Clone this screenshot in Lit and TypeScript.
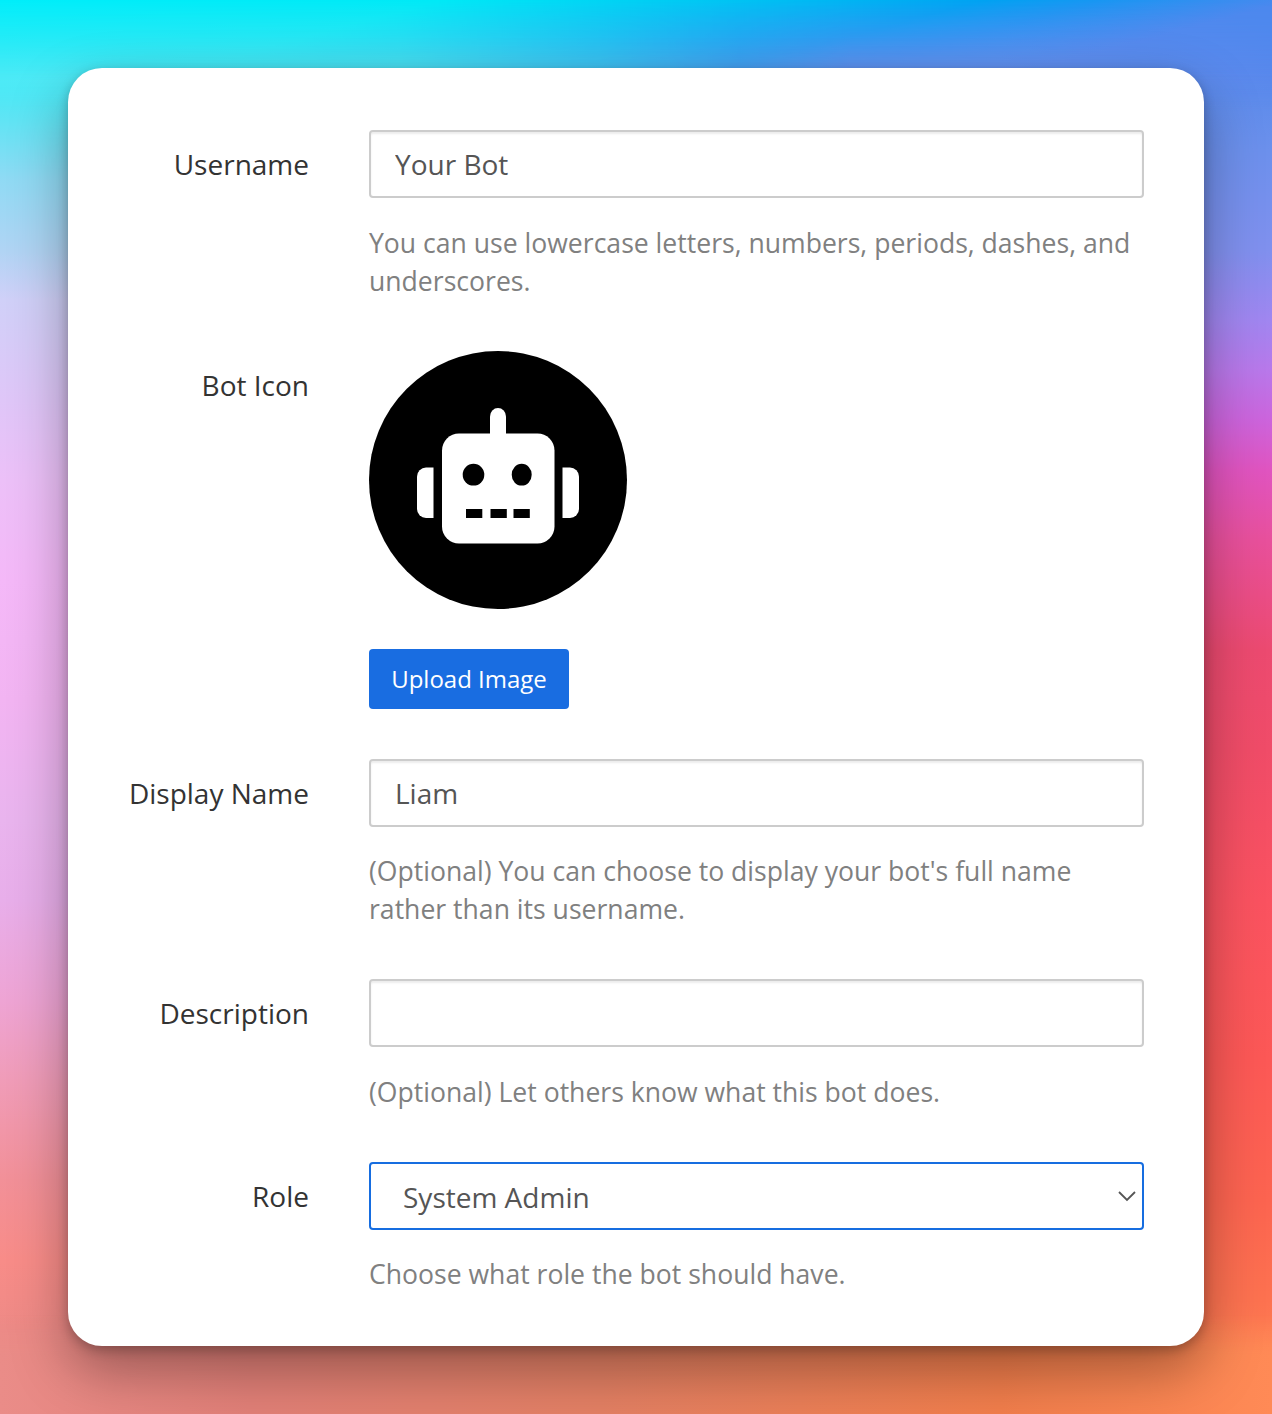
import { LitElement, html, css, svg, nothing } from "lit";
import { customElement, property } from "lit/decorators.js";

const robot = svg`
  <circle cx="129" cy="129" r="129" fill="#000"/>
  <g fill="#fff">
    <path d="M121 84V65.500a8 8.500 0 0 1 16 0V84z"/>
    <rect x="73" y="82.500" width="112.500" height="110" rx="17"/>
    <path d="M64.500 116.500v50.500h-7.500a9 9 0 0 1-9-9v-32.500a9 9 0 0 1 9-9z"/>
    <path d="M193.500 116.500v50.500h7.500a9 9 0 0 0 9-9v-32.500a9 9 0 0 0-9-9z"/>
  </g>
  <g fill="#000">
    <ellipse cx="104.500" cy="123.700" rx="10.800" ry="10.900"/>
    <ellipse cx="152.700" cy="123.700" rx="10" ry="10.900"/>
    <rect x="97" y="158" width="16.300" height="9"/>
    <rect x="121.500" y="158" width="16.300" height="9"/>
    <rect x="144.500" y="158" width="16.300" height="9"/>
  </g>`;

@customElement("form-row")
class FormRow extends LitElement {
  @property() label = "";
  @property() help = "";

  static styles = css`
    :host { display: grid; grid-template-columns: 241px 775px; column-gap: 60px; }
    .label { text-align: right; color: #333; font-size: 28px; line-height: 38px; padding-top: 15px; }
    .help { margin: var(--help-gap, 25px) 0 0; font-size: 26.580px; line-height: 38px; color: #808080; }
  `;

  render() {
    return html`
      <div class="label">${this.label}</div>
      <div class="body">
        <slot></slot>
        ${this.help ? html`<p class="help">${this.help}</p>` : nothing}
      </div>`;
  }
}

@customElement("app-root")
class AppRoot extends LitElement {
  static styles = css`
    :host {
      display: block;
      font-family: "Open Sans", "Noto Sans", sans-serif;
    }
    .page {
      position: relative;
      isolation: isolate;
      box-sizing: border-box;
      height: 1414px;
      padding: 68px;
      overflow: hidden;
      background: linear-gradient(180deg,
        #00f0fc 0, #38ecf8 60px, #60e4f4 120px, #90daf4 180px, #b0d4f4 250px,
        #d0d0f8 300px, #dfc6f8 400px, #ecc0f8 480px, #f4b8f8 580px, #f2b4f2 700px,
        #e9b4ee 820px, #e8aeea 900px, #eea4d4 1000px, #f09cb8 1080px,
        #f29098 1180px, #f88c88 1260px, #ee8a86 1330px, #e98e86 1414px);
    }
    .warm, .sky, .ember {
      position: absolute;
      inset: 0;
      z-index: -1;
    }
    .warm {
      background: linear-gradient(180deg,
        #3f8cf0 0, #5288ea 50px, #6c90ec 150px, #8090ee 250px, #a086f0 320px,
        #b878ea 370px, #cc64dc 420px, #e054c0 470px, #e8509c 540px, #ec4a70 650px,
        #f04c68 750px, #fa5260 900px, #fc5856 1060px, #fc6450 1200px,
        #fd7250 1300px, #ff8a56 1414px);
      -webkit-mask-image: linear-gradient(90deg, transparent 5%, #000 95%);
      mask-image: linear-gradient(90deg, transparent 5%, #000 95%);
    }
    .sky {
      height: 110px;
      bottom: auto;
      background: linear-gradient(90deg, #50eaf6 0, #5ae2f0 400px, #4cc4f0 600px, #52a0f0 740px, #6c92f0 850px, #6892f0 1000px, #5a88ec 1272px);
      -webkit-mask-image: linear-gradient(180deg, #000 70px, transparent);
      mask-image: linear-gradient(180deg, #000 70px, transparent);
    }
    .sky::after {
      content: "";
      position: absolute;
      inset: 0;
      background: linear-gradient(165deg, #00eefa 0, #00e9f6 114px, #00d0f4 165px, #00a2f2 255px, #1896f2 285px, #4a88ee 335px);
      -webkit-mask-image: linear-gradient(180deg, #000 0, rgba(0, 0, 0, 0.6) 35px, transparent 80px);
      mask-image: linear-gradient(180deg, #000 0, rgba(0, 0, 0, 0.6) 35px, transparent 80px);
    }
    .ember {
      top: auto;
      height: 100px;
      background: linear-gradient(90deg, #ea8c88 0, #e28078 250px, #e48064 600px, #f27e4c 1000px, #ff8a56 1272px);
      -webkit-mask-image: linear-gradient(180deg, transparent, #000 40px);
      mask-image: linear-gradient(180deg, transparent, #000 40px);
    }
    .card {
      box-sizing: border-box;
      height: 1278px;
      padding: 62px 60px 0 0;
      border-radius: 34px;
      background: #fff;
      box-shadow: 0 24px 56px rgba(0, 0, 0, 0.34), 0 4px 12px rgba(0, 0, 0, 0.24);
      display: flex;
      flex-direction: column;
      gap: 51px;
    }
    .icon-row { margin-bottom: -1px; }
    .roomy { --help-gap: 26px; }
    .field {
      display: block;
      box-sizing: border-box;
      width: 775px;
      height: 68px;
      margin: 0;
      padding: 0 24px;
      border: 2px solid #ccc;
      border-radius: 4px;
      outline: none;
      background: #fff;
      box-shadow: inset 0 2px 2px rgba(0, 0, 0, 0.075);
      font: 28px "Open Sans", "Noto Sans", sans-serif;
      color: #555;
    }
    .select {
      display: flex;
      align-items: center;
      justify-content: space-between;
      padding: 2px 6px 0 32px;
      border-color: #166de0;
      box-shadow: none;
    }
    .chevron { width: 18px; height: 12px; margin-top: -3px; }
    .avatar { display: block; width: 258px; height: 258px; }
    .upload {
      display: block;
      width: 200px;
      height: 60px;
      margin-top: 40px;
      padding: 0 0 2px;
      border: 0;
      border-radius: 4px;
      background: #196de1;
      color: #fff;
      font: 24px "Open Sans", "Noto Sans", sans-serif;
    }
  `;

  render() {
    return html`
      <main class="page">
        <div class="warm"></div>
        <div class="sky"></div>
        <div class="ember"></div>
        <section class="card">
          <form-row class="roomy" label="Username" help="You can use lowercase letters, numbers, periods, dashes, and underscores.">
            <input class="field" aria-label="Username" .value=${"Your Bot"}>
          </form-row>
          <form-row class="icon-row" label="Bot Icon">
            <svg class="avatar" viewBox="0 0 258 258">${robot}</svg>
            <button class="upload">Upload Image</button>
          </form-row>
          <form-row label="Display Name" help="(Optional) You can choose to display your bot's full name rather than its username.">
            <input class="field" aria-label="Display Name" .value=${"Liam"}>
          </form-row>
          <form-row class="roomy" label="Description" help="(Optional) Let others know what this bot does.">
            <input class="field" aria-label="Description">
          </form-row>
          <form-row label="Role" help="Choose what role the bot should have.">
            <div class="field select" role="combobox" tabindex="0">
              <span>System Admin</span>
              <svg class="chevron" viewBox="0 0 18 12" fill="none" stroke="#555" stroke-width="1.800">
                <path d="M1 2l8 8 8-8"/>
              </svg>
            </div>
          </form-row>
        </section>
      </main>`;
  }
}
